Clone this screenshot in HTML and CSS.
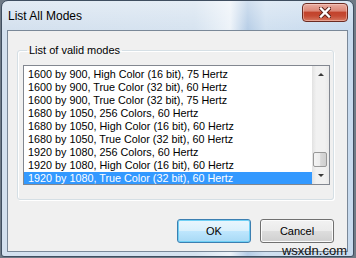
FILE: index.html
```html
<!DOCTYPE html>
<html>
<head>
<meta charset="utf-8">
<link rel="stylesheet" href="styles.css">
</head>
<body>
<div class="window">
  <div class="titlebar">
    <span class="title">List All Modes</span>
    <div class="close">
      <svg width="12" height="11" viewBox="0 0 12 11">
        <path d="M2 1.5 L10 9.5 M10 1.5 L2 9.5" stroke="#5a2019" stroke-width="4.2" stroke-linecap="square" fill="none"/>
        <path d="M2 1.5 L10 9.5 M10 1.5 L2 9.5" stroke="#ffffff" stroke-width="2.4" stroke-linecap="square" fill="none"/>
      </svg>
    </div>
  </div>
  <div class="client">
    <fieldset class="group">
      <legend>List of valid modes</legend>
      <div class="listbox">
        <ul class="items">
          <li>1600 by 900, High Color (16 bit), 75 Hertz</li>
          <li>1600 by 900, True Color (32 bit), 60 Hertz</li>
          <li>1600 by 900, True Color (32 bit), 75 Hertz</li>
          <li>1680 by 1050, 256 Colors, 60 Hertz</li>
          <li>1680 by 1050, High Color (16 bit), 60 Hertz</li>
          <li>1680 by 1050, True Color (32 bit), 60 Hertz</li>
          <li>1920 by 1080, 256 Colors, 60 Hertz</li>
          <li>1920 by 1080, High Color (16 bit), 60 Hertz</li>
          <li class="sel">1920 by 1080, True Color (32 bit), 60 Hertz</li>
        </ul>
        <div class="scrollbar">
          <div class="arrow"><span class="tri up"></span></div>
          <div class="track"><div class="thumb"></div></div>
          <div class="arrow"><span class="tri down"></span></div>
        </div>
      </div>
    </fieldset>
    <div class="buttons">
      <button class="btn default">OK</button>
      <button class="btn">Cancel</button>
    </div>
  </div>
  <div class="watermark">wsxdn.com</div>
</div>
</body>
</html>
```
FILE: styles.css
```css
html, body {
  margin: 0;
  padding: 0;
}
body {
  width: 356px;
  height: 258px;
  overflow: hidden;
  background: #6f7a86;
  font-family: "Liberation Sans", Arial, sans-serif;
  color: #000;
}
.window {
  position: relative;
  margin-left: 1px;
  width: 353px;
  height: 257px;
  box-sizing: border-box;
  border: 1px solid #3f4e60;
  border-radius: 7px 7px 3px 3px;
  padding: 0 5px 4px 5px;
  display: flex;
  flex-direction: column;
  background:
    linear-gradient(180deg, rgba(255,255,255,0.35) 0px, rgba(255,255,255,0) 30px),
    linear-gradient(90deg, #d3e0ee 0%, #d6e3f0 55%, #edf3f9 65%, #b6cde6 70%, #d0e0f0 75%, #c7daee 100%);
}
.titlebar {
  height: 29px;
  display: flex;
  justify-content: space-between;
  align-items: flex-start;
}
.title {
  font-size: 12px;
  line-height: 13px;
  padding: 9px 0 0 1px;
}
.close {
  margin-top: 2px;
  width: 46px;
  height: 19px;
  box-sizing: border-box;
  border: 1px solid #6b2b22;
  border-radius: 4px;
  background: linear-gradient(180deg, #e9ada2 0%, #dc8878 40%, #c2432c 50%, #c54a33 70%, #d67860 100%);
  box-shadow: inset 0 0 0 1px rgba(255,220,210,0.45);
  display: flex;
  align-items: center;
  justify-content: center;
}
.client {
  height: 222px;
  box-sizing: border-box;
  border: 1px solid #7a8898;
  background: #f0f0f0;
  padding: 0 13px 0 9px;
}
.group {
  margin: 13px 0 0 0;
  padding: 0 3px 14px 5px;
  border: 1px solid #d5dfe5;
  border-radius: 3px;
  box-shadow: inset 1px 1px #fff, 1px 1px #fff;
  min-width: 0;
}
.group legend {
  margin-left: 4px;
  padding: 0 2px;
  font-size: 11px;
  line-height: 13px;
}
.listbox {
  margin-top: 8px;
  height: 120px;
  box-sizing: border-box;
  border: 1px solid #828790;
  background: #fff;
  display: flex;
}
.items {
  flex: 1;
  min-width: 0;
  list-style: none;
  margin: 0;
  padding: 2px 0 0 0;
  overflow: hidden;
  font-size: 10.8px;
  line-height: 13px;
}
.items li {
  height: 13px;
  padding-left: 4px;
  white-space: nowrap;
}
.items li.sel {
  background: #3399ff;
  color: #fff;
}
.scrollbar {
  width: 17px;
  display: flex;
  flex-direction: column;
  background: linear-gradient(90deg, #e2e2e2 0%, #f1f1f1 25%, #f1f1f1 75%, #e9e9e9 100%);
}
.arrow {
  height: 17px;
  display: flex;
  align-items: center;
  justify-content: center;
}
.tri {
  width: 0;
  height: 0;
  border-left: 3px solid transparent;
  border-right: 3px solid transparent;
}
.tri.up {
  border-bottom: 3px solid #3a3a3a;
}
.tri.down {
  border-top: 3px solid #3a3a3a;
}
.track {
  flex: 1;
  display: flex;
  flex-direction: column;
  justify-content: flex-end;
}
.thumb {
  height: 15px;
  margin: 0 2px 0 1px;
  box-sizing: border-box;
  border: 1px solid #989898;
  border-radius: 2px;
  background: linear-gradient(90deg, #f4f4f4 0%, #ececec 50%, #d8d8d8 55%, #cfcfcf 100%);
}
.buttons {
  display: flex;
  justify-content: flex-end;
  gap: 9px;
  margin-top: 19px;
}
.btn {
  width: 74px;
  height: 24px;
  padding: 0;
  font-family: "Liberation Sans", Arial, sans-serif;
  font-size: 11px;
  color: #000;
  border: 1px solid #707070;
  border-radius: 3px;
  background: linear-gradient(180deg, #f2f2f2 0%, #ebebeb 48%, #dddddd 52%, #cfcfcf 100%);
  box-shadow: inset 0 0 0 1px #fbfbfb;
}
.btn.default {
  border-color: #3c7fb1;
  background: linear-gradient(180deg, #eaf6fd 0%, #d9f0fc 48%, #bee6fd 52%, #a7d9f5 100%);
  box-shadow: inset 0 0 0 1px #6fd0f5;
}
.watermark {
  position: absolute;
  right: 6px;
  bottom: -2px;
  font-size: 13px;
  line-height: 15px;
  color: #111;
}
```
